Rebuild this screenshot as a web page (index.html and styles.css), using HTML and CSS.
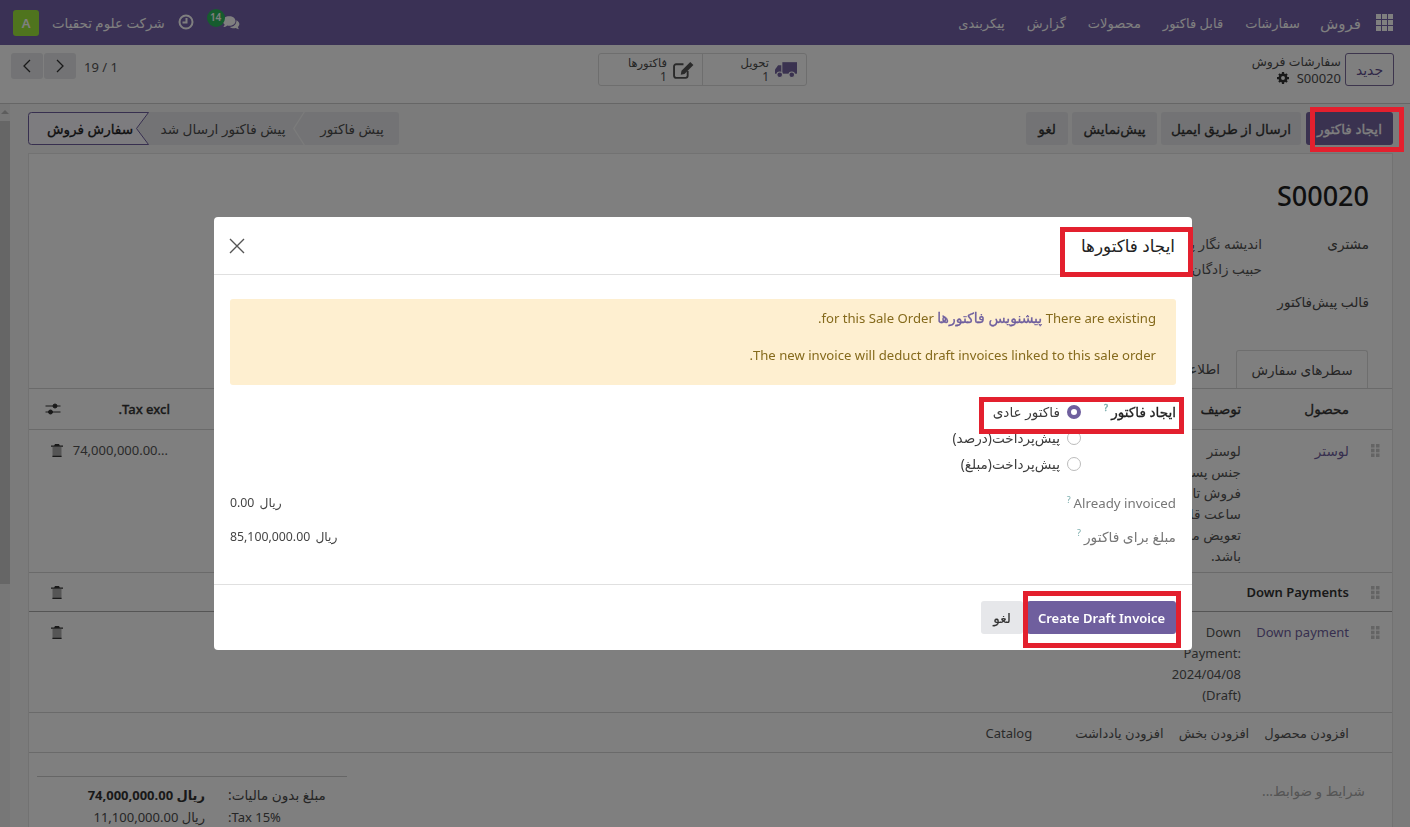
FILE: index.html
```html
<!DOCTYPE html>
<html lang="fa" dir="rtl">
<head>
<meta charset="utf-8">
<title>ایجاد فاکتورها</title>
<link rel="stylesheet" href="styles.css">
</head>
<body>
<div class="app">
  <header class="navbar">
    <nav class="menu">
      <svg class="apps" viewBox="0 0 17 17"><path d="M0 0h5v5H0zM6 0h5v5H6zM12 0h5v5h-5zM0 6h5v5H0zM6 6h5v5H6zM12 6h5v5h-5zM0 12h5v5H0zM6 12h5v5H6zM12 12h5v5h-5z"/></svg>
      <span class="brand">فروش</span>
      <a>سفارشات</a>
      <a>قابل فاکتور</a>
      <a>محصولات</a>
      <a>گزارش</a>
      <a>پیکربندی</a>
    </nav>
    <div class="systray">
      <span class="chat">
        <svg class="chat-icon" viewBox="0 0 20 16"><path d="M8 1c4 0 7 2.300 7 5.300s-3 5.300-7 5.300c-.8 0-1.500-.1-2.200-.3C4.500 12.400 3 13 1.500 13c.8-.8 1.300-1.700 1.400-2.700C1.700 9.300 1 7.900 1 6.300 1 3.300 4 1 8 1z"/><path d="M16 5.500c2 .9 3.300 2.500 3.300 4.300 0 1.300-.6 2.400-1.600 3.300.1.900.6 1.700 1.300 2.400-1.400 0-2.700-.5-3.800-1.300-.6.200-1.300.3-2 .3-1.800 0-3.400-.6-4.600-1.500 4.300-.1 7.700-3 7.400-7.500z"/></svg>
        <b class="badge">14</b>
      </span>
      <svg class="clock" viewBox="0 0 16 16"><circle cx="8" cy="8" r="6.500"/><path d="M8.500 4v4.500H4.500"/></svg>
      <span class="company">شرکت علوم تحقیات</span>
      <span class="avatar">A</span>
    </div>
  </header>

  <section class="control">
    <div class="crumbs">
      <button class="btn-new">جدید</button>
      <div class="crumb-text">
        <div class="crumb-title">سفارشات فروش</div>
        <div class="crumb-id"><span>S00020</span>
          <svg class="gear" viewBox="0 0 16 16"><circle cx="8" cy="8" r="4.300" fill="none" stroke-width="3.400"/><path class="teeth" d="M6.500 0h3v3h-3zM6.500 13h3v3h-3zM0 6.500h3v3H0zM13 6.500h3v3h-3zM1.600 3.700l2.100-2.100 2.100 2.100-2.100 2.100zM10.200 12.300l2.100-2.100 2.100 2.100-2.100 2.100zM1.600 12.300l2.100-2.100 2.100 2.100-2.100 2.100zM10.200 3.700l2.100-2.100 2.100 2.100-2.100 2.100z"/></svg>
        </div>
      </div>
    </div>
    <div class="stats">
      <div class="stat stat-first">
        <svg class="truck" viewBox="0 0 21 16"><path d="M7 1h14v11H7z"/><path d="M6 4H3L0 8v4h6z"/><circle cx="4.500" cy="13" r="2.700" class="wheel"/><circle cx="16" cy="13" r="2.700" class="wheel"/></svg>
        <div class="stat-text"><span>تحویل</span><span>1</span></div>
      </div>
      <div class="stat">
        <svg class="edit" viewBox="0 0 21 17"><path class="edit-box" d="M14 9.500V14a2 2 0 0 1-2 2H3a2 2 0 0 1-2-2V5a2 2 0 0 1 2-2h7"/><path class="edit-pen" d="M16.500.8l3 3L11 12.300l-3.600.7.700-3.700z"/></svg>
        <div class="stat-text"><span>فاکتورها</span><span>1</span></div>
      </div>
    </div>
    <div class="pager">
      <span class="pager-count">1 / 19</span>
      <div class="pager-btns">
        <button class="pager-btn"><svg viewBox="0 0 10 16"><path d="M2 2l6 6-6 6"/></svg></button>
        <button class="pager-btn"><svg viewBox="0 0 10 16"><path d="M8 2L2 8l6 6"/></svg></button>
      </div>
    </div>
  </section>

  <div class="workspace">
    <main class="content">
      <div class="statusbar">
        <div class="actions">
          <button class="btn btn-primary">ایجاد فاکتور</button>
          <button class="btn">ارسال از طریق ایمیل</button>
          <button class="btn">پیش‌نمایش</button>
          <button class="btn">لغو</button>
        </div>
        <div class="stages">
          <span class="stage stage-last">پیش فاکتور</span>
          <span class="stage stage-mid">پیش فاکتور ارسال شد</span>
          <span class="stage stage-active">
            <svg class="stage-shape" viewBox="0 0 121 33"><path d="M120.500.5H3.500a3 3 0 0 0-3 3v26a3 3 0 0 0 3 3h117l-12-16z"/></svg>
            <span class="stage-label">سفارش فروش</span>
          </span>
        </div>
      </div>

      <article class="sheet">
        <h1 class="order-name">S00020</h1>
        <div class="fields">
          <span class="f-label">مشتری</span>
          <span class="f-value">اندیشه نگار پارس<br>حبیب زادگان</span>
          <span class="f-label f-gap">قالب پیش‌فاکتور</span>
          <span></span>
        </div>
        <div class="tabs">
          <span class="tab tab-active">سطرهای سفارش</span>
          <span class="tab">اطلاعات دیگر</span>
        </div>

        <div class="row row-head">
          <span></span>
          <span class="c-pad">محصول</span>
          <span class="c-pad">توصیف</span>
          <span></span>
          <span class="c-pad c-latin">Tax excl.</span>
          <svg class="sliders" viewBox="0 0 15 12"><path d="M0 3h15M0 9h15"/><circle cx="9.500" cy="3" r="2"/><circle cx="5" cy="9" r="2"/></svg>
        </div>
        <div class="row row-line row-first">
          <svg class="grip" viewBox="0 0 9 13"><path d="M0 0h3.500v3.500H0zM5 0h3.500v3.500H5zM0 4.700h3.500v3.500H0zM5 4.700h3.500v3.500H5zM0 9.400h3.500v3.500H0zM5 9.400h3.500v3.500H5z"/></svg>
          <span class="c-pad c-link c-fa">لوستر</span>
          <span class="c-pad c-desc">لوستر<br>جنس پسکرایت<br>فروش تا ۴۸<br>ساعت قابل<br>تعویض می<br>باشد.</span>
          <span></span>
          <span class="c-amount">74,000,000.00...</span>
          <svg class="trash" viewBox="0 0 12 13"><path class="trash-body" d="M1.500 3h9v10h-9z"/><path class="trash-dark" d="M4 0h4l.8 1.500H12v1.200H0V1.500h3.200zM1.500 11.800h9V13h-9z"/></svg>
        </div>
        <div class="row row-section">
          <svg class="grip" viewBox="0 0 9 13"><path d="M0 0h3.500v3.500H0zM5 0h3.500v3.500H5zM0 4.700h3.500v3.500H0zM5 4.700h3.500v3.500H5zM0 9.400h3.500v3.500H0zM5 9.400h3.500v3.500H5z"/></svg>
          <span class="c-pad c-section">Down Payments</span>
          <svg class="trash" viewBox="0 0 12 13"><path class="trash-body" d="M1.500 3h9v10h-9z"/><path class="trash-dark" d="M4 0h4l.8 1.500H12v1.200H0V1.500h3.200zM1.500 11.800h9V13h-9z"/></svg>
        </div>
        <div class="row row-line row-down">
          <svg class="grip" viewBox="0 0 9 13"><path d="M0 0h3.500v3.500H0zM5 0h3.500v3.500H5zM0 4.700h3.500v3.500H0zM5 4.700h3.500v3.500H5zM0 9.400h3.500v3.500H0zM5 9.400h3.500v3.500H5z"/></svg>
          <span class="c-pad c-link">Down payment</span>
          <span class="c-pad">Down Payment: 2024/04/08 (Draft)</span>
          <span></span>
          <span></span>
          <svg class="trash" viewBox="0 0 12 13"><path class="trash-body" d="M1.500 3h9v10h-9z"/><path class="trash-dark" d="M4 0h4l.8 1.500H12v1.200H0V1.500h3.200zM1.500 11.800h9V13h-9z"/></svg>
        </div>
        <div class="add-row">
          <a>افزودن محصول</a>
          <a>افزودن بخش</a>
          <a>افزودن یادداشت</a>
          <a class="add-catalog">Catalog</a>
        </div>
        <div class="bottom">
          <span class="terms">شرایط و ضوابط...</span>
          <div class="totals">
            <span class="t-label t-fa">مبلغ بدون مالیات:</span><b>ریال 74,000,000.00</b>
            <span class="t-label">Tax 15%:</span><span>ریال 11,100,000.00</span>
          </div>
        </div>
      </article>
    </main>
    <aside class="scrollbar"><span class="scroll-arrow"></span><span class="scroll-thumb"></span></aside>
  </div>
</div>

<div class="backdrop"></div>

<div class="modal">
  <div class="modal-head">
    <h2>ایجاد فاکتورها</h2>
    <svg class="close" viewBox="0 0 16 16"><path d="M1 1l14 14M15 1L1 15"/></svg>
  </div>
  <div class="modal-body">
    <div class="alert">
      <p>There are existing <a>پیشنویس فاکتورها</a> for this Sale Order.</p>
      <p>The new invoice will deduct draft invoices linked to this sale order.</p>
    </div>
    <div class="form">
      <span class="label label-strong">ایجاد فاکتور<sup>?</sup></span>
      <div class="radios">
        <label class="radio"><i class="dot dot-on"></i>فاکتور عادی</label>
        <label class="radio"><i class="dot"></i>پیش‌پرداخت(درصد)</label>
        <label class="radio"><i class="dot"></i>پیش‌پرداخت(مبلغ)</label>
      </div>
      <span class="label label-amount">Already invoiced<sup>?</sup></span>
      <span class="amount">ریال 0.00</span>
      <span class="label label-amount label-fa">مبلغ برای فاکتور<sup>?</sup></span>
      <span class="amount">ریال 85,100,000.00</span>
    </div>
  </div>
  <div class="modal-foot">
    <button class="mbtn mbtn-primary">Create Draft Invoice</button>
    <button class="mbtn">لغو</button>
  </div>
</div>

<span class="mark mark-invoice"></span>
<span class="mark mark-title"></span>
<span class="mark mark-radio"></span>
<span class="mark mark-create"></span>
</body>
</html>
```
FILE: styles.css
```css
* { box-sizing: border-box; }
html, body { margin: 0; height: 100%; overflow: hidden; }
body {
  font-family: "Noto Sans", "DejaVu Sans", sans-serif;
  font-size: 13.6px;
  line-height: 20px;
  color: #4c4c4c;
  background: #fff;
}
button { font: inherit; border: 0; padding: 0; background: none; color: inherit; }
h1, h2, p { margin: 0; font-weight: inherit; }

.app { height: 827px; display: flex; flex-direction: column; overflow: hidden; }

/* top bar */
.navbar {
  height: 45px; flex: none; background: #7462aa; color: #fff;
  display: flex; justify-content: space-between; align-items: center;
  padding: 0 17px 0 13px; font-size: 13px;
}
.menu { display: flex; align-items: center; gap: 22px; }
.apps { width: 17px; height: 17px; fill: #fff; margin-left: -7px; }
.brand { font-size: 15px; margin-left: -2px; }
.systray { display: flex; align-items: center; gap: 13px; }
.chat { position: relative; width: 32px; height: 20px; display: block; margin-top: -8px; }
.chat-icon { position: absolute; left: 15px; top: 6px; width: 18px; height: 15px; fill: #fff; }
.badge {
  position: absolute; left: 0; top: 0; width: 18px; height: 18px; border-radius: 50%;
  background: #2cb85c; font: 600 10px/17px "Noto Sans", sans-serif; text-align: center;
}
.clock { width: 16px; height: 16px; fill: none; stroke: #fff; stroke-width: 2; margin-top: -2px; }
.company { font-size: 13.400px; }
.avatar {
  width: 26px; height: 26px; border-radius: 3px; background: #9ee83c;
  text-align: center; line-height: 26px; font-weight: 600;
}

/* control panel */
.control {
  height: 59px; flex: none; background: #fff; border-bottom: 1px solid #ccc;
  display: grid; grid-template-columns: 1fr auto 1fr; align-items: start;
  padding: 8px 16px 0 11px;
}
.crumbs { display: flex; gap: 4px; }
.btn-new {
  width: 49px; height: 33px; border: 1px solid #7a6a9a; border-radius: 3px; color: #5f4f90; font-size: 14px;
}
.crumb-text { line-height: 16px; padding-top: 1px; }
.crumb-title { font-size: 12.400px; }
.crumb-id { display: flex; align-items: center; gap: 8px; font-size: 13px; }
.gear { width: 12px; height: 12px; stroke: #333; fill: #333; }
.teeth { stroke: none; }
.stats { display: flex; height: 33px; border: 1px solid #ddd; border-radius: 3px; width: 209px; }
.stat {
  width: 104px; display: flex; align-items: center; gap: 6px; padding: 0 7px 0 0; color: #4c4c4c;
}
.stat-first { width: 105px; padding-right: 9px; border-left: 1px solid #ddd; }
.truck { width: 22px; height: 17px; fill: #7465a0; }
.wheel { stroke: #fff; stroke-width: 1; fill: #7465a0; }
.edit { width: 22px; height: 18px; fill: none; }
.edit-box { stroke: #555; stroke-width: 1.800; }
.edit-pen { fill: #555; }
.stat-text { display: flex; flex-direction: column; line-height: 14px; font-size: 11.500px; }
.stat-text span:last-child { color: #555; font-size: 12px; }
.pager { display: flex; justify-content: flex-end; align-items: center; gap: 8px; height: 26px; }
.pager-count { color: #555; padding-top: 2px; font-size: 13px; }
.pager-btns { display: flex; gap: 1px; flex-direction: row; }
.pager-btn { width: 32px; height: 26px; background: #e6e7ea; border-radius: 3px; display: flex; align-items: center; justify-content: center; }
.pager-btn svg { width: 10px; height: 16px; fill: none; stroke: #333; stroke-width: 1.300; }

/* content */
.workspace { flex: 1; display: flex; min-height: 0; background: #f7f7f7; }
.content { flex: 1; padding: 0 17px 0 18px; min-width: 0; }
.scrollbar { width: 10px; flex: none; background: #eeeeee; padding-top: 17px; position: relative; display: flex; flex-direction: column; }
.scroll-arrow { position: absolute; top: 6px; right: 1px; border: 4px solid transparent; border-bottom-color: #bbb; border-top: 0; }
.scroll-thumb { height: 463px; background: #cccccc; }
.statusbar { height: 49px; display: flex; justify-content: space-between; padding-top: 8px; }
.actions { display: flex; gap: 4px; }
.btn { height: 33px; width: 85px; background: #e6e7ea; border-radius: 3px; font-weight: 500; -webkit-text-stroke: .3px; color: #333; }
.btn:nth-child(2) { width: 140px; }
.btn:nth-child(4) { width: 42px; }
.btn-primary { background: #7465a0; color: #fff; width: 87px; margin-left: 1px; }
.stages { display: flex; height: 33px; width: 371px; background: #e6e7ea; border-radius: 3px; }
.stage { display: flex; align-items: center; justify-content: center; position: relative; }
.stage-active { width: 121px; color: #222; font-weight: 500; -webkit-text-stroke: .3px; }
.stage-shape { position: absolute; inset: 0; width: 121px; height: 33px; fill: #faf8ff; stroke: #6f5f9e; stroke-width: 1; }
.stage-label { position: relative; padding-left: 3px; }
.stage-mid { flex: 1; padding-right: 8px; }
.stage-last { width: 94px; }
.stage-last::before {
  content: ""; position: absolute; left: -12px; top: 0; width: 12px; height: 33px;
  background: #f7f7f7; clip-path: polygon(88% 0, 100% 0, 12% 50%, 100% 100%, 88% 100%, 0 50%);
}
.sheet { background: #fff; border: 1px solid #e4e4e4; border-bottom: 0; height: 700px; }
.order-name { font-size: 27px; line-height: 34px; font-weight: 500; color: #1e1e1e; padding: 25px 23px 0 0; }
.fields { display: grid; grid-template-columns: 108px 1fr; padding: 22px 23px 0 0; line-height: 25px; margin-top: -4px; }
.f-value { color: #555; margin-right: -1px; }
.f-gap { margin-top: 8px; white-space: nowrap; }
.tabs { display: flex; height: 38px; margin-top: 36px; padding-right: 24px; }
.tab { padding: 0 16px; line-height: 38px; }
.tab-active { width: 132px; background: #fff; border: 1px solid #ddd; border-bottom: 0; border-radius: 3px 3px 0 0; text-align: center; padding: 0; }

.row {
  display: grid; grid-template-columns: 35px 108px 87px 1fr 107px 42px;
  border-top: 1px solid #d4d4d4;
}
.row-head { height: 41px; align-items: center; font-weight: 500; -webkit-text-stroke: .3px; color: #333; }
.c-latin { font-size: 13px; }
.row-line { padding-top: 10px; color: #555; line-height: 21px; font-size: 13px; }
.row-first { height: 143px; }
.row-down { height: 101px; border-top-color: #aaa; }
.row-section { height: 39px; align-items: center; grid-template-columns: 35px 1fr 42px; font-weight: 600; color: #333; font-size: 13px; }
.c-pad { padding: 0 8px; }
.c-link { color: #6f5f9e; white-space: nowrap; }
.c-fa { font-size: 13.600px; }
.c-desc { white-space: nowrap; overflow: hidden; font-size: 13.600px; }
.grip { width: 9px; height: 13px; fill: #c8c8c8; margin: 4px 12px 0 0; }
.row-section .grip { margin-top: 0; }
.trash { width: 12px; height: 13px; margin: 4px 8px 0 0; }
.trash-body { fill: #aaa; }
.trash-dark { fill: #333; }
.row-section .trash { margin-top: 0; }
.c-amount { direction: ltr; text-align: right; white-space: nowrap; overflow: hidden; color: #555; padding-right: 10px; }
.sliders { width: 16px; height: 12px; stroke: #333; fill: #333; margin-right: 10px; stroke-width: 1; }
.add-row {
  height: 41px; display: flex; align-items: center; gap: 15px; padding: 0 43px 0 0;
  border-top: 1px solid #d4d4d4; border-bottom: 1px solid #d4d4d4; color: #555; font-size: 13px;
}
.add-catalog { margin-right: 28px; }
.bottom { display: flex; justify-content: space-between; padding: 23px 27px 0 8px; }
.terms { color: #aaa; padding-top: 5px; }
.totals {
  width: 310px; border-top: 1px solid #ccc; padding: 7px 18px 0 0;
  display: grid; grid-template-columns: 124px 1fr; line-height: 22px; font-size: 13px;
}
.t-label { text-align: left; padding-left: 23px; white-space: nowrap; }
.t-fa { font-size: 13.600px; }
.totals b { font-weight: 700; color: #333; }

/* overlay */
.backdrop { position: fixed; inset: 0; background: rgba(0, 0, 0, .5); }
.modal {
  position: fixed; left: 214px; top: 217px; width: 978px; height: 433px;
  background: #fff; border-radius: 4px; display: flex; flex-direction: column; color: #555;
  font-size: 13px;
}
.modal-head {
  height: 58px; flex: none; border-bottom: 1px solid #e0e0e0;
  display: flex; justify-content: space-between; align-items: center; padding: 0 17px 0 15px;
}
.modal-head h2 { font-size: 16.800px; font-weight: 500; color: #222; }
.close { width: 16px; height: 16px; stroke: #555; stroke-width: 1.400; fill: none; }
.modal-body { flex: 1; padding: 24px 16px 0; }
.alert {
  height: 86px; background: #feefd0; border-radius: 3px; color: #856a1c; padding: 9px 20px 0; font-size: 13.150px;
}
.alert p { line-height: 20px; margin-bottom: 17px; }
.alert a { color: #6f5f9e; font-weight: 500; font-size: 14px; -webkit-text-stroke: .3px; }
.form { display: grid; grid-template-columns: 95px 1fr; margin-top: 14px; }
.label { color: #777; white-space: nowrap; }
.label sup { font-size: 9px; color: #7aa; margin-right: 3px; line-height: 0; }
.label-strong { color: #222; font-weight: 500; -webkit-text-stroke: .3px; padding-top: 3px; font-size: 13.600px; }
.label-amount { height: 34px; line-height: 34px; font-size: 13.300px; }
.label-fa { font-size: 13.800px; }
.radios { display: flex; flex-direction: column; margin-bottom: 9px; font-size: 13.600px; }
.radio { height: 26px; display: flex; align-items: center; gap: 7px; color: #3c3c3c; }
.dot { width: 14px; height: 14px; border-radius: 50%; border: 1px solid #bbb; background: #fff; flex: none; }
.dot-on { border: 4px solid #6f5f9e; }
.amount { line-height: 34px; color: #444; font-size: 12.300px; word-spacing: 2px; justify-self: end; }
.modal-foot {
  height: 66px; flex: none; border-top: 1px solid #e0e0e0; display: flex; gap: 4px; padding: 16px 16px 0;
}
.mbtn { height: 33px; width: 42px; border-radius: 3px; background: #e6e7ea; color: #333; font-size: 13.600px; -webkit-text-stroke: .2px; }
.mbtn-primary { width: 149px; background: #6f5f9e; color: #fff; font-weight: 600; font-size: 13px; -webkit-text-stroke: 0; }

/* red annotation boxes */
.mark { position: fixed; border: 5px solid #e3202e; }
.mark-invoice { left: 1310px; top: 107px; width: 94px; height: 45px; }
.mark-title { left: 1060px; top: 227px; width: 133px; height: 50px; }
.mark-radio { left: 979px; top: 397px; width: 205px; height: 37px; }
.mark-create { left: 1023px; top: 591px; width: 158px; height: 57px; }
```
